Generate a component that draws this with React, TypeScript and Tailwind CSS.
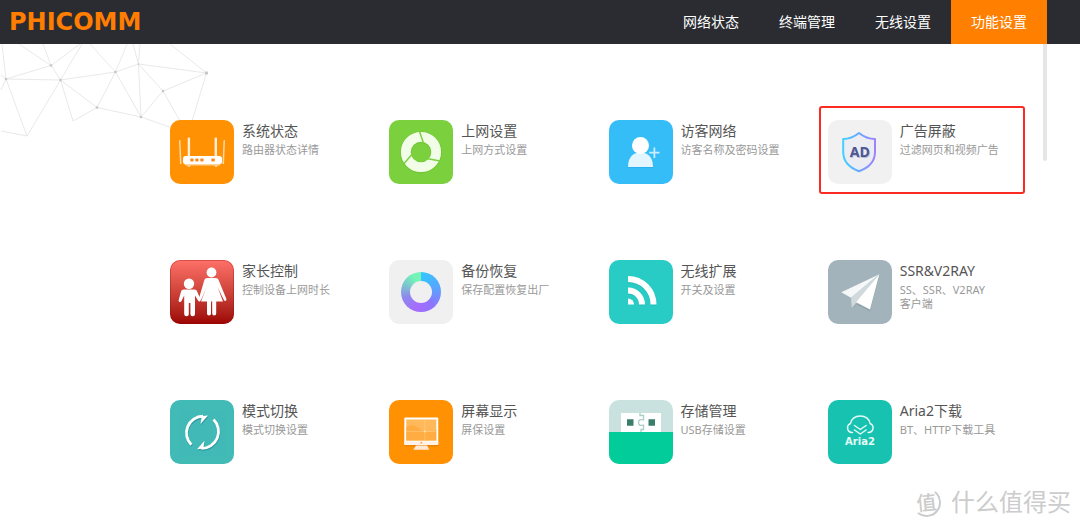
import type { ReactNode } from "react";

const navItems = ["网络状态", "终端管理", "无线设置", "功能设置"];
const activeNav = "功能设置";

function IconSvg({ children }: { children: ReactNode }) {
  return (
    <svg viewBox="0 0 64 64" className="size-16" aria-hidden="true">
      {children}
    </svg>
  );
}

const RouterIcon = () => (
  <IconSvg>
    <g fill="#fff">
      <path d="M9 20.500q1-1 1.500 0l1 23.500h-1.500z" opacity=".65" />
      <path d="M55 20.500q-1-1-1.500 0l-1 23.500h1.500z" opacity=".65" />
      <rect x="17.700" y="17.500" width="2.400" height="20" rx="1" opacity=".85" />
      <rect x="44.600" y="17.500" width="2.400" height="20" rx="1" opacity=".85" />
      <path d="M13 42h39l-2.500 3.500h-2l-.500 1.500h-2l-.500-1.500h-24l-.500 1.500h-2l-.500-1.500h-2z" opacity=".6" />
      <path d="M15 36h35q2 0 2 2.500v3q0 2.500-2.500 2.500H15.500Q13 44 13 41.500v-3Q13 36 15 36z" />
    </g>
    <g fill="#ff8a1c">
      <rect x="20.200" y="38.500" width="3.400" height="3" rx="1" />
      <rect x="25.200" y="38.500" width="3.400" height="3" rx="1" />
      <rect x="30.200" y="38.500" width="3.400" height="3" rx="1" />
      <rect x="41.300" y="38.500" width="3.600" height="3" rx="1" />
    </g>
  </IconSvg>
);

const ApertureIcon = () => (
  <IconSvg>
    <circle cx="32" cy="32.500" r="15.200" fill="none" stroke="#68ba2f" strokeWidth="11.500" opacity=".4" />
    <circle cx="32" cy="32" r="15.200" fill="none" stroke="#f2fde8" strokeWidth="9.800" />
    <g stroke="#7bd03e" strokeWidth="1.500">
      <path d="M30.300 11l4 11.500" />
      <path d="M30.300 11l4 11.500" transform="rotate(120 32 32)" />
      <path d="M30.300 11l4 11.500" transform="rotate(240 32 32)" />
    </g>
  </IconSvg>
);

const GuestIcon = () => (
  <IconSvg>
    <path d="M19 48a12.500 14.500 0 0 1 25 0z" fill="#1f9fdf" opacity=".45" />
    <path d="M19 47c0-8 3.500-13 9-14h7c5.500 1 9 6 9 14z" fill="#e3f6ff" />
    <circle cx="31.500" cy="25.500" r="8.500" fill="#fff" />
    <path d="M45.400 27.500v10.500M40.200 32.700h10.300" stroke="#c9edfd" strokeWidth="1.800" />
  </IconSvg>
);

const AdShieldIcon = () => (
  <IconSvg>
    <defs>
      <linearGradient id="shield" x1="0" x2="1">
        <stop offset="0" stopColor="#40d0ff" />
        <stop offset=".5" stopColor="#68a8ff" />
        <stop offset="1" stopColor="#a182fc" />
      </linearGradient>
    </defs>
    <path
      d="M31 13C26 17 20 19 15.200 19v13c0 9.500 7 16 15.800 19.300C40 48 47 41.500 47 32V19C42 19 36 17 31 13z"
      fill="#ececf3"
      stroke="url(#shield)"
      strokeWidth="2"
      strokeLinejoin="round"
    />
    <text x="32.500" y="38" textAnchor="middle" fill="#b9bcce" className="text-[14px] font-bold font-['Open_Sans',sans-serif]">AD</text>
    <text x="31.800" y="36.500" textAnchor="middle" fill="#4b5793" className="text-[14px] font-bold font-['Open_Sans',sans-serif]">AD</text>
  </IconSvg>
);

const FamilyIcon = () => (
  <IconSvg>
    <rect x=".5" y=".5" width="63" height="63" rx="9.500" fill="none" stroke="#8e1212" strokeOpacity=".35" />
    <g fill="#fff">
      <circle cx="41.500" cy="12.500" r="4.900" />
      <path d="M37.500 18h8c1.800 0 2.600.8 3.200 2.300l7.600 18.500c.8 2-1.500 2.900-2.400 1.200l-6.400-13 5.500 14.500H31l5.500-14.500-5 12c-1 1.800-3.200.8-2.400-1.200l5.200-17.500c.5-1.500 1.400-2.300 3.200-2.300z" />
      <path d="M37 41h4v12.500a2 2 0 0 1-4 0zM42.200 41h4v12.500a2 2 0 0 1-4 0z" />
      <circle cx="19" cy="23.800" r="5.200" />
      <path d="M14 29.500h10c2 0 2.800.8 3.400 2.500l3.200 7.500c.6 1.900-1.700 2.700-2.600 1L25 35.500V54a2.300 2.300 0 0 1-4.600 0V43h-1.600v11a2.300 2.300 0 0 1-4.600 0V35.500L11.500 41c-.8 1.900-3.400 1-2.800-1l2.200-8c.5-1.700 1.200-2.500 3.100-2.500z" />
    </g>
  </IconSvg>
);

const BackupIcon = () => (
  <span className="flex size-10 items-center justify-center rounded-full bg-[conic-gradient(#30c8ff_0deg,#5aa4ff_75deg,#8f74ff_140deg,#a66cff_195deg,#8e86ee_250deg,#7cc6cf_295deg,#72f5b5_335deg,#7cf0b8_360deg)]">
    <span className="size-[22px] rounded-full bg-[#f0f0f0]" />
  </span>
);

const FeedIcon = () => (
  <IconSvg>
    <g fill="none" stroke="#16a8a2" strokeWidth="6" opacity=".4" transform="translate(0 1)">
      <path d="M19 19a25.500 25.500 0 0 1 25.500 25.500M19 30.500a14 14 0 0 1 14 14" />
    </g>
    <g fill="none" stroke="#fff" strokeWidth="6">
      <path d="M19 19a25.500 25.500 0 0 1 25.500 25.500M19 30.500a14 14 0 0 1 14 14" />
    </g>
    <path d="M19 38.500a6 6 0 0 1 6 6h-6z" fill="#fff" />
  </IconSvg>
);

const PlaneIcon = () => (
  <IconSvg>
    <path d="M51.300 16L42 51.300l-13.300-6.600-4.700 5z" fill="#7f919b" opacity=".45" />
    <path d="M51.300 14.300L13.300 32.300 23 37.800z" fill="#f5f7f8" />
    <path d="M51.300 14.300L23 37.800l.8 10.200L29 41.500z" fill="#d0d9dc" />
    <path d="M51.300 14.300L28 42.300 42 49.500z" fill="#fff" />
  </IconSvg>
);

const SwitchArcs = () => (
  <>
    <path d="M21.300 44.800A16.800 16.800 0 0 1 33 16.200M43.500 19.500A16.800 16.800 0 0 1 31.500 48.300" fill="none" stroke="currentColor" strokeWidth="2.800" />
    <path d="M28 16.500l10-1-7.500 8.500 1-6zM37 48.300l-10 1 7.500-8.500-1 6z" fill="currentColor" />
  </>
);

const SwitchIcon = () => (
  <IconSvg>
    <g className="text-[#24838f]" opacity=".6" transform="translate(.5 1.200)"><SwitchArcs /></g>
    <g className="text-white"><SwitchArcs /></g>
  </IconSvg>
);

const DisplayIcon = () => (
  <IconSvg>
    <rect x="15.500" y="18.500" width="34" height="28" rx="1" fill="#c87000" opacity=".4" />
    <rect x="15.300" y="17.500" width="34" height="27.500" rx="1" fill="#fff" />
    <path d="M15.300 41.500h34V44q0 1-1 1h-32q-1 0-1-1z" fill="#fff1e6" />
    <rect x="17.300" y="19.500" width="30" height="21" fill="#ffb95a" />
    <path d="M17.300 27c5-3 9-2 13 1.500s10 5 17 1.500v10.500h-30z" fill="#ffad42" />
    <path d="M35.800 19.500v21M17.300 31.500h30" stroke="#ffd091" strokeWidth=".5" />
    <circle cx="35.800" cy="31.500" r="1" fill="#ffe3bd" />
    <circle cx="32.300" cy="42.700" r=".9" fill="#ff9d3c" />
    <path d="M27 45.500h11l2.300 4.200H24.300z" fill="#ffe9d6" />
  </IconSvg>
);

const UsbIcon = () => (
  <IconSvg>
    <path d="M0 32h64v32H0z" fill="#03cc9b" />
    <path d="M12 13h40v19H12z" fill="#fff" />
    <path d="M18 19.300h6.500v6.500H18zM39.500 19.300H46v6.500h-6.500z" fill="#3a7d69" />
    <path d="M31 13v2.500h3.500V20q-5-1.500-5 2.500t5 2.500v4.500H32V32" fill="none" stroke="#a9cec5" strokeWidth="1.300" />
  </IconSvg>
);

const AriaIcon = () => (
  <IconSvg>
    <g fill="none" stroke="#e6faf7" strokeWidth="1.500" strokeLinecap="round" strokeLinejoin="round">
      <path d="M24.500 32.500h-1a4.700 4.700 0 0 1-1-9c.5-4.500 4.500-7.500 9.800-7.500s9.300 3 9.800 7.500a4.700 4.700 0 0 1-1 9h-1" />
      <path d="M26.500 25.500l5.800 4 5.800-4M26.500 30l5.800 4 5.800-4" />
    </g>
    <text x="32" y="45" textAnchor="middle" fill="#e6faf7" className="text-[10px] font-bold font-['DejaVu_Sans',sans-serif]">Aria2</text>
  </IconSvg>
);

type Feature = {
  title: string;
  detail: string;
  tile: string;
  icon: ReactNode;
  highlighted?: boolean;
};

const features: Feature[] = [
  { title: "系统状态", detail: "路由器状态详情", tile: "bg-[#ff9102]", icon: <RouterIcon /> },
  { title: "上网设置", detail: "上网方式设置", tile: "bg-[#7bd03e]", icon: <ApertureIcon /> },
  { title: "访客网络", detail: "访客名称及密码设置", tile: "bg-[#35bdf8]", icon: <GuestIcon /> },
  { title: "广告屏蔽", detail: "过滤网页和视频广告", tile: "bg-[#f1f1f1]", icon: <AdShieldIcon />, highlighted: true },
  { title: "家长控制", detail: "控制设备上网时长", tile: "bg-linear-to-b from-[#ff7168] to-[#9c0000]", icon: <FamilyIcon /> },
  { title: "备份恢复", detail: "保存配置恢复出厂", tile: "bg-[#f0f0f0]", icon: <BackupIcon /> },
  { title: "无线扩展", detail: "开关及设置", tile: "bg-[#29ccc5]", icon: <FeedIcon /> },
  { title: "SSR&V2RAY", detail: "SS、SSR、V2RAY\n客户端", tile: "bg-[#a2b3bb]", icon: <PlaneIcon /> },
  { title: "模式切换", detail: "模式切换设置", tile: "bg-[#42bab6]", icon: <SwitchIcon /> },
  { title: "屏幕显示", detail: "屏保设置", tile: "bg-[#ff9102]", icon: <DisplayIcon /> },
  { title: "存储管理", detail: "USB存储设置", tile: "bg-[#c9e2df]", icon: <UsbIcon /> },
  { title: "Aria2下载", detail: "BT、HTTP下载工具", tile: "bg-[#17c3b0]", icon: <AriaIcon /> },
];

const nodes = [
  [6, 35, 1.3], [51, 21.500, 1.3], [60.500, 36, 1.3], [97, 63.500, 1.3], [115.500, 28, 1.3],
  [141, 73, 1.3], [163, 47, 1.3], [206.500, 29, 1.7], [138.500, 20, 0.8],
];

function NetworkBackdrop() {
  return (
    <svg viewBox="0 0 220 100" className="absolute top-0 left-0 h-[100px] w-[220px]" aria-hidden="true">
      <path
        d="M2 0L6 35 51 21.500 19 0M43 0l8 21.500L80 0M51 21.500l9.500 14.500L82 0M6 35l54.500 1L27 92 6 35M1 31l5 4-5 11M1 87l26 5M60.500 36L73 77l24-13.500L60.500 36l55-8L97 63.500l44 9.500-25.500-45L90 0M115.500 28L127 0M115.500 28l23-8L133 0M140 0l-1.500 20L141 73l22-26-24.500-27 68 9L163 47l17 30M141 73l37 13M206.500 29L170 0M206.500 29L192 77"
        fill="none"
        stroke="#e9e9e9"
        strokeWidth="1"
      />
      {nodes.map(([x, y, r]) => (
        <circle key={`${x}-${y}`} cx={x} cy={y} r={r} fill="#c6c6c6" />
      ))}
    </svg>
  );
}

function FeatureLink({ title, detail, tile, icon, highlighted }: Feature) {
  return (
    <li className="relative h-16">
      <a href="#" className="flex gap-2">
        <span className={`flex size-16 shrink-0 items-center justify-center overflow-hidden rounded-[10px] ${tile}`}>
          {icon}
        </span>
        <span className="flex flex-col gap-px">
          <span className="text-[14px] leading-[22px] whitespace-nowrap text-[#555]">{title}</span>
          <span className="text-[11px] leading-[14px] whitespace-pre-line text-[#999]">{detail}</span>
        </span>
      </a>
      {highlighted && (
        <span className="pointer-events-none absolute -top-[14px] right-[22px] -bottom-[10px] -left-[9px] rounded-[3px] border-2 border-[#fb2a22]" />
      )}
    </li>
  );
}

export default function App() {
  return (
    <div className="relative flex min-h-screen flex-col bg-white font-['Noto_Sans','Noto_Sans_CJK_SC',sans-serif]">
      <header className="flex h-11 items-center justify-between bg-[#2b2c31] pr-[33px] pl-[9px]">
        <a href="#" className="font-['DejaVu_Sans',sans-serif] text-[24px] leading-none font-bold text-[#ff7d00]">
          PHICOMM
        </a>
        <nav className="flex h-full">
          {navItems.map((item) => (
            <a
              key={item}
              href="#"
              className={`flex w-24 items-center justify-center pb-[2px] text-[14px] text-white ${item === activeNav ? "bg-[#ff8000]" : ""}`}
            >
              {item}
            </a>
          ))}
        </nav>
      </header>

      <main className="relative flex flex-1 items-start pr-[33px]">
        <NetworkBackdrop />
        <ul className="relative grid flex-1 grid-cols-4 gap-y-[76px] pt-[76px] pb-16 pl-[170px]">
          {features.map((feature) => (
            <FeatureLink key={feature.title} {...feature} />
          ))}
        </ul>
        <div className="-ml-1 h-[117px] w-1 shrink-0 rounded-b-full bg-[#e6e6e6]" />
      </main>

      <div className="absolute right-[9px] bottom-[9px] flex items-center gap-[10px] text-[#cccccc]">
        <span className="flex size-[29px] -rotate-6 items-center justify-center rounded-full border-2 border-t-transparent border-l-transparent border-[#cccccc] text-[20px] leading-none font-medium">
          值
        </span>
        <span className="text-[24px] leading-[34px]">什么值得买</span>
      </div>
    </div>
  );
}
